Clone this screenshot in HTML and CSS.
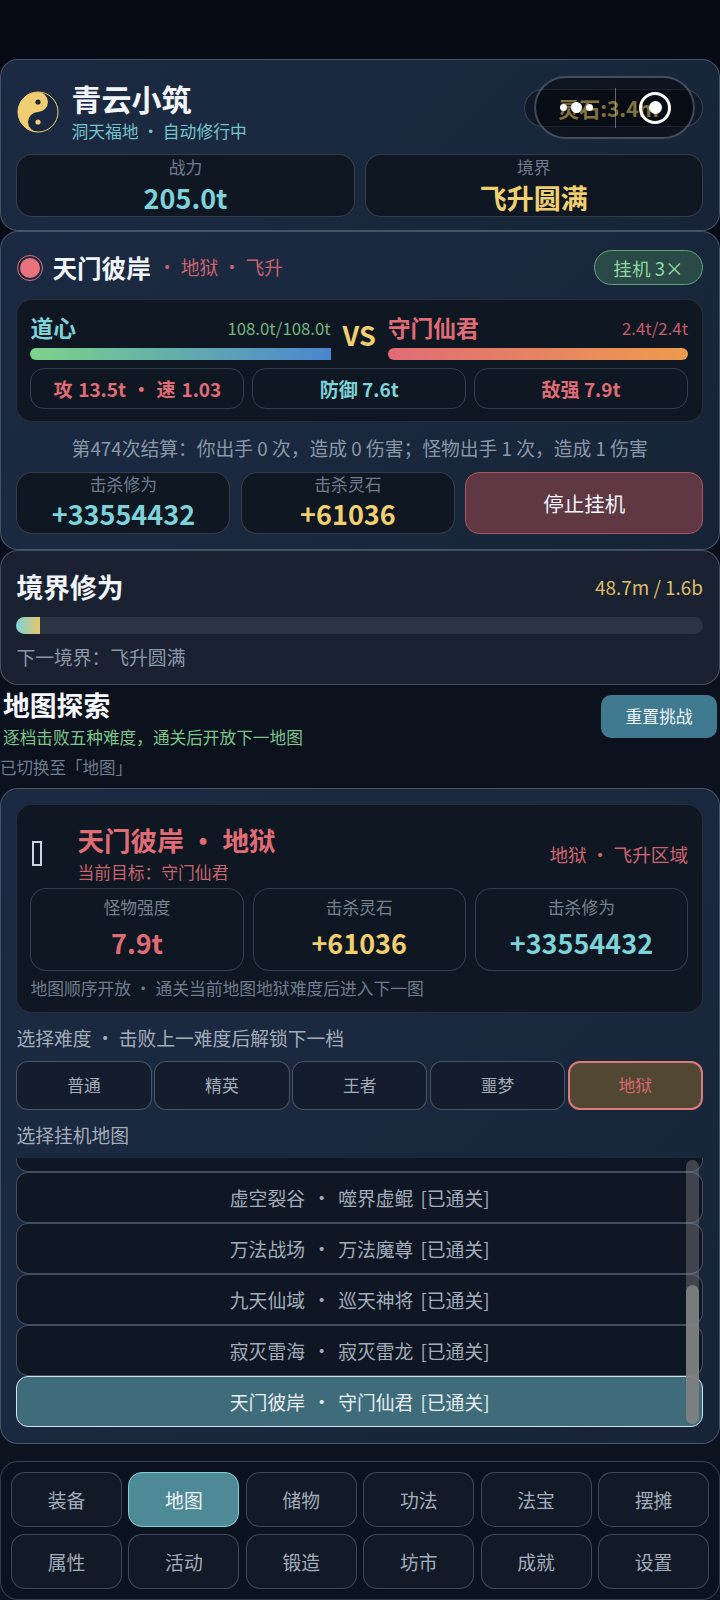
FILE: index.html
```html
<!doctype html>
<html>
  <head>
    <meta charset="UTF-8" />
    <title>青云小筑</title>
    <link rel="stylesheet" href="styles.css">
  </head>
  <body>
    <!-- header -->
    <div class="card card-blue header-card">
      <div class="header-row">
        <svg class="taiji" viewBox="-21 -21 42 42">
          <circle r="20" fill="#1a2740" stroke="#f0cd70" stroke-width="1" />
          <path d="M0 -20A20 20 0 0 0 0 20A10 10 0 0 1 0 0A10 10 0 0 0 0 -20Z" fill="#f0cd70" />
          <circle cy="-10" r="2.6" fill="#1a2740" />
          <circle cy="10" r="2.6" fill="#f0cd70" />
        </svg>
        <div class="header-text">
          <div class="header-title">青云小筑</div>
          <div class="header-sub">洞天福地 · 自动修行中</div>
        </div>
        <div class="stone-pill">灵石:3.4m</div>
      </div>
      <div class="header-stats">
        <div class="stat-box header-stat">
          <div class="stat-label">战力</div>
          <div class="stat-value teal">205.0t</div>
        </div>
        <div class="stat-box header-stat">
          <div class="stat-label">境界</div>
          <div class="stat-value gold">飞升圆满</div>
        </div>
      </div>
      <!-- capsule over the header -->
      <div class="capsule">
        <div class="capsule-dots">
          <span class="dot-small"></span>
          <span class="dot-big"></span>
          <span class="dot-small"></span>
        </div>
        <div class="capsule-line"></div>
        <div class="capsule-close"><span></span></div>
      </div>
    </div>

    <!-- battle -->
    <div class="card card-blue battle-card">
      <div class="battle-head">
        <span class="live-dot"><span></span></span>
        <span class="battle-name">天门彼岸</span>
        <span class="battle-tag">· 地狱 · 飞升</span>
        <span class="idle-pill">挂机 3×</span>
      </div>
      <div class="inner-box battle-box">
        <div class="versus">
          <div class="fighter">
            <div class="fighter-row">
              <span class="fighter-name teal">道心</span>
              <span class="fighter-hp green">108.0t/108.0t</span>
            </div>
            <div class="hp-bar hp-self"></div>
          </div>
          <div class="vs">VS</div>
          <div class="fighter">
            <div class="fighter-row">
              <span class="fighter-name red">守门仙君</span>
              <span class="fighter-hp red">2.4t/2.4t</span>
            </div>
            <div class="hp-bar hp-enemy"></div>
          </div>
        </div>
        <div class="chips">
          <div class="chip chip-attack red">攻 13.5t · 速 1.03</div>
          <div class="chip teal">防御 7.6t</div>
          <div class="chip red">敌强 7.9t</div>
        </div>
      </div>
      <div class="battle-log">第474次结算：你出手 0 次，造成 0 伤害；怪物出手 1 次，造成 1 伤害</div>
      <div class="battle-bottom">
        <div class="stat-box reward-box">
          <div class="stat-label">击杀修为</div>
          <div class="stat-value teal">+33554432</div>
        </div>
        <div class="stat-box reward-box">
          <div class="stat-label">击杀灵石</div>
          <div class="stat-value gold">+61036</div>
        </div>
        <div class="stop-button">停止挂机</div>
      </div>
    </div>

    <!-- realm progress -->
    <div class="card card-plain realm-card">
      <div class="realm-head">
        <span class="realm-title">境界修为</span>
        <span class="realm-value">48.7m / 1.6b</span>
      </div>
      <div class="realm-bar"><div class="realm-fill"></div></div>
      <div class="realm-next">下一境界：飞升圆满</div>
    </div>

    <!-- map section title -->
    <div class="map-head">
      <div>
        <div class="map-title">地图探索</div>
        <div class="map-sub">逐档击败五种难度，通关后开放下一地图</div>
      </div>
      <div class="reset-button">重置挑战</div>
    </div>
    <div class="map-notice">已切换至「地图」</div>

    <!-- map -->
    <div class="card card-blue map-card">
      <div class="inner-box target-box">
        <div class="target-head">
          <span class="target-icon"></span>
          <div class="target-text">
            <div class="target-title">天门彼岸 · 地狱</div>
            <div class="target-sub">当前目标：守门仙君</div>
          </div>
          <div class="target-zone">地狱 · 飞升区域</div>
        </div>
        <div class="target-stats">
          <div class="stat-box target-stat">
            <div class="stat-label">怪物强度</div>
            <div class="stat-value red">7.9t</div>
          </div>
          <div class="stat-box target-stat">
            <div class="stat-label">击杀灵石</div>
            <div class="stat-value gold">+61036</div>
          </div>
          <div class="stat-box target-stat">
            <div class="stat-label">击杀修为</div>
            <div class="stat-value teal">+33554432</div>
          </div>
        </div>
        <div class="target-foot">地图顺序开放 · 通关当前地图地狱难度后进入下一图</div>
      </div>

      <div class="select-label label-first">选择难度 · 击败上一难度后解锁下一档</div>
      <div class="levels">
        <div class="level">普通</div>
        <div class="level">精英</div>
        <div class="level">王者</div>
        <div class="level">噩梦</div>
        <div class="level level-active">地狱</div>
      </div>
      <div class="select-label label-second">选择挂机地图</div>
      <div class="map-list">
        <div class="map-items">
          <div class="map-item"></div>
          <div class="map-item">虚空裂谷 · 噬界虚鲲 [已通关]</div>
          <div class="map-item">万法战场 · 万法魔尊 [已通关]</div>
          <div class="map-item">九天仙域 · 巡天神将 [已通关]</div>
          <div class="map-item">寂灭雷海 · 寂灭雷龙 [已通关]</div>
          <div class="map-item map-item-active">天门彼岸 · 守门仙君 [已通关]</div>
        </div>
        <div class="scroll-track"><div class="scroll-thumb"></div></div>
      </div>
    </div>

    <!-- bottom nav -->
    <div class="nav">
      <div class="nav-item">装备</div>
      <div class="nav-item nav-active">地图</div>
      <div class="nav-item">储物</div>
      <div class="nav-item">功法</div>
      <div class="nav-item">法宝</div>
      <div class="nav-item">摆摊</div>
      <div class="nav-item">属性</div>
      <div class="nav-item">活动</div>
      <div class="nav-item">锻造</div>
      <div class="nav-item">坊市</div>
      <div class="nav-item">成就</div>
      <div class="nav-item">设置</div>
    </div>
  </body>
</html>
```

FILE: styles.css
```css
* {
  box-sizing: border-box;
}

html {
  background: #0a101b;
}

body {
  width: 720px;
  height: 1600px;
  margin: 0;
  padding-top: 59px;
  overflow: hidden;
  background: linear-gradient(180deg, #060a14 0%, #0b111d 45%, #0c1420 100%);
  color: #cbd5e1;
  font-family: 'Noto Sans CJK SC', 'Noto Sans', sans-serif;
}

.teal {
  color: #7dd3d8;
}
.gold {
  color: #f0cf6e;
}
.red {
  color: #e06c75;
}
.green {
  color: #86d08e;
}

/* cards */
.card {
  position: relative;
  border: 1px solid rgba(148, 163, 184, 0.36);
  border-radius: 18px;
  padding-left: 15.4px;
  padding-right: 16px;
}
.card-blue {
  background: linear-gradient(135deg, #1b2a42 0%, #1a293f 45%, #172437 100%);
}
.card-plain {
  background: #1a2131;
}
.inner-box {
  background: #0f1723;
  border: 1px solid rgba(148, 163, 184, 0.16);
  border-radius: 16px;
}
.stat-box {
  background: #0f1723;
  border: 1px solid rgba(148, 163, 184, 0.28);
  border-radius: 16px;
  text-align: center;
}
.stat-label {
  color: #6f7c8e;
  font-size: 16.8px;
  line-height: 24px;
}
.stat-value {
  font-size: 27px;
  font-weight: 700;
  line-height: 34px;
}

/* header */
.header-card {
  height: 172px;
  padding-top: 21px;
}
.header-row {
  display: flex;
  align-items: center;
  height: 62px;
}
.taiji {
  width: 42px;
  height: 42px;
  margin: 0 12px 0 1px;
  flex-shrink: 0;
}
.header-text {
  flex: 1;
}
.header-title {
  margin-top: -1px;
  color: #f1f5f9;
  font-size: 30px;
  font-weight: 700;
  line-height: 36px;
}
.header-sub {
  margin-top: 3px;
  color: #76c4cb;
  font-size: 16.8px;
  line-height: 24px;
}
.stone-pill {
  width: 179px;
  height: 38px;
  margin-top: -8px;
  padding-right: 10px;
  border: 1px solid rgba(148, 163, 184, 0.3);
  border-radius: 20px;
  background: rgba(15, 23, 35, 0.8);
  color: #f0cf6e;
  font-size: 21px;
  font-weight: 700;
  line-height: 36px;
  text-align: center;
}
.header-stats {
  display: grid;
  grid-template-columns: 1fr 1fr;
  gap: 10px;
  margin-top: 11px;
}
.header-stat {
  height: 63px;
}
.header-stat .stat-value {
  margin-top: 2px;
}

/* capsule */
.capsule {
  position: absolute;
  top: 16px;
  right: 24px;
  display: flex;
  align-items: center;
  width: 161px;
  height: 63px;
  border: 2px solid rgba(148, 163, 184, 0.4);
  border-radius: 32px;
  background: rgba(0, 0, 0, 0.45);
}
.capsule-dots {
  display: flex;
  align-items: center;
  justify-content: flex-end;
  gap: 4px;
  width: 57px;
  margin-right: 22px;
}
.dot-small {
  width: 7px;
  height: 7px;
  border-radius: 50%;
  background: #fff;
}
.dot-big {
  width: 11px;
  height: 11px;
  border-radius: 50%;
  background: #fff;
}
.capsule-line {
  width: 1px;
  height: 40px;
  background: rgba(203, 213, 225, 0.45);
}
.capsule-close {
  display: flex;
  align-items: center;
  justify-content: center;
  width: 32px;
  height: 32px;
  margin-left: 23px;
  border: 3px solid #fff;
  border-radius: 50%;
}
.capsule-close span {
  width: 13px;
  height: 13px;
  border-radius: 50%;
  background: #fff;
}

/* battle */
.battle-card {
  height: 319px;
  padding-top: 18px;
}
.battle-head {
  display: flex;
  align-items: center;
  height: 35px;
}
.live-dot {
  display: flex;
  align-items: center;
  justify-content: center;
  width: 26px;
  height: 26px;
  margin: 0 9px 0 1px;
  border: 1px solid #e06c75;
  border-radius: 50%;
}
.live-dot span {
  width: 20px;
  height: 20px;
  border-radius: 50%;
  background: #e8737c;
}
.battle-name {
  margin-top: -2px;
  color: #f1f5f9;
  font-size: 24.6px;
  font-weight: 700;
}
.battle-tag {
  flex: 1;
  margin-top: -2px;
  margin-left: 7px;
  color: #c9636d;
  font-size: 18.8px;
}
.idle-pill {
  width: 109px;
  height: 35px;
  border: 1px solid #5fa578;
  border-radius: 18px;
  background: #2a4a47;
  color: #8fd6a0;
  font-size: 18.6px;
  line-height: 33px;
  text-align: center;
}
.battle-box {
  height: 123px;
  margin-top: 14px;
  padding: 12px 14px 12px 13px;
}
.versus {
  display: grid;
  grid-template-columns: 1fr 57px 1fr;
}
.fighter-row {
  display: flex;
  align-items: center;
  justify-content: space-between;
  height: 36px;
  padding-bottom: 5px;
}
.fighter-name {
  font-size: 22.8px;
  font-weight: 700;
}
.fighter-hp {
  font-size: 16.8px;
  opacity: 0.85;
}
.hp-bar {
  height: 12px;
  border-radius: 6px 0 0 6px;
}
.hp-self {
  background: linear-gradient(90deg, #7dd38a 0%, #4a86cf 100%);
}
.hp-enemy {
  border-radius: 6px;
  background: linear-gradient(90deg, #e06c75 0%, #ee9b4e 100%);
}
.vs {
  padding-top: 6px;
  color: #f0cf6e;
  font-size: 27px;
  font-weight: 700;
  line-height: 34px;
  text-align: center;
}
.chips {
  display: grid;
  grid-template-columns: repeat(3, 1fr);
  gap: 8px;
  margin-top: 8px;
}
.chip {
  height: 41px;
  border: 1px solid rgba(148, 163, 184, 0.28);
  border-radius: 14px;
  font-size: 19px;
  font-weight: 700;
  line-height: 39px;
  text-align: center;
}
.chip-attack {
  word-spacing: 1.5px;
}
.battle-log {
  margin-top: 14px;
  color: #8b98a9;
  font-size: 18.8px;
  line-height: 24px;
  text-align: center;
}
.battle-bottom {
  display: grid;
  grid-template-columns: 214px 214px 1fr;
  gap: 10.5px;
  height: 62px;
  margin-top: 12px;
}
.reward-box .stat-label {
  margin-top: -1px;
}
.reward-box .stat-value {
  margin-top: 1px;
}
.stop-button {
  border: 1px solid #a85561;
  border-radius: 14px;
  background: #5f3844;
  color: #f1f5f9;
  font-size: 20.5px;
  line-height: 60px;
  text-align: center;
}

/* realm */
.realm-card {
  height: 135px;
  padding-top: 17px;
}
.realm-head {
  display: flex;
  align-items: center;
  justify-content: space-between;
  height: 36px;
}
.realm-title {
  color: #f1f5f9;
  font-size: 26.8px;
  font-weight: 700;
}
.realm-value {
  color: #dcbc6a;
  font-size: 18.9px;
}
.realm-bar {
  height: 17px;
  margin-top: 13px;
  border-radius: 9px;
  background: #2c3444;
}
.realm-fill {
  width: 24px;
  height: 17px;
  border-radius: 9px 0 0 9px;
  background: linear-gradient(90deg, #7dd3d8 0%, #e6c66a 100%);
}
.realm-next {
  margin-top: 11px;
  color: #8b98a9;
  font-size: 18.8px;
  line-height: 24px;
}

/* map head */
.map-head {
  display: flex;
  justify-content: space-between;
  padding: 2px 3px 0 3px;
}
.map-title {
  color: #f5f7fa;
  font-size: 26.8px;
  font-weight: 700;
  line-height: 36px;
}
.map-sub {
  margin-top: 2px;
  color: #7cc68a;
  font-size: 16.67px;
  line-height: 24px;
}
.reset-button {
  width: 116px;
  height: 43px;
  margin-top: 8px;
  border-radius: 10px;
  background: #3f7a90;
  color: #eef4f7;
  font-size: 16.8px;
  line-height: 43px;
  text-align: center;
}
.map-notice {
  margin-top: 6px;
  color: #6f7c8e;
  font-size: 16.5px;
  line-height: 24px;
}

/* map card */
.map-card {
  height: 656px;
  margin-top: 9px;
  padding-top: 15px;
}
.target-box {
  height: 209px;
  padding: 17px 14px 0 13px;
}
.target-head {
  display: flex;
  align-items: center;
  height: 66px;
  padding-bottom: 4px;
}
.target-icon {
  width: 10px;
  height: 25px;
  margin: 0 35px 0 2px;
  border: 2px solid #cbd5e1;
}
.target-text {
  flex: 1;
}
.target-title {
  color: #e06c75;
  font-size: 26.6px;
  font-weight: 700;
  line-height: 36px;
}
.target-sub {
  margin-top: 2px;
  color: #c9636d;
  font-size: 16.8px;
  line-height: 24px;
}
.target-zone {
  color: #d0656f;
  font-size: 18.6px;
}
.target-stats {
  display: grid;
  grid-template-columns: repeat(3, 1fr);
  gap: 9px;
}
.target-stat {
  height: 83px;
  padding-top: 6px;
}
.target-stat .stat-label {
  color: #76828f;
}
.target-stat .stat-value {
  margin-top: 7px;
}
.target-foot {
  margin-top: 6px;
  color: #6f7c8e;
  font-size: 16.8px;
  line-height: 22px;
}
.select-label {
  color: #a3adba;
  font-size: 18.8px;
  line-height: 24px;
}
.label-first {
  margin-top: 13px;
}
.label-second {
  margin-top: 13px;
}
.levels {
  display: grid;
  grid-template-columns: repeat(5, 1fr);
  gap: 2.4px;
  margin-top: 11px;
}
.level {
  height: 49px;
  border: 1px solid rgba(148, 163, 184, 0.42);
  border-radius: 12px;
  background: #141d2d;
  color: #a3adba;
  font-size: 16.8px;
  line-height: 47px;
  text-align: center;
}
.level-active {
  border: 2px solid #dd7a7c;
  background: #524733;
  color: #d9676f;
  line-height: 45px;
}
.map-list {
  position: relative;
  height: 269px;
  margin-top: 11px;
  overflow: hidden;
}
.map-items {
  display: flex;
  flex-direction: column;
  justify-content: flex-end;
  height: 100%;
}
.map-item {
  flex: 0 0 50.8px;
  border: 1px solid rgba(148, 163, 184, 0.4);
  border-radius: 12px;
  background: #0f1724;
  color: #a3adba;
  font-size: 18.8px;
  line-height: 49px;
  text-align: center;
  word-spacing: 3px;
}
.map-item-active {
  border-color: #d4e4e8;
  background: #3f6c7a;
  color: #e8eef2;
}
.scroll-track {
  position: absolute;
  top: 2px;
  right: 4px;
  width: 13px;
  height: 264px;
  border-radius: 7px;
  background: rgba(160, 160, 160, 0.33);
}
.scroll-thumb {
  width: 13px;
  height: 139px;
  margin-top: 125px;
  border-radius: 7px;
  background: #7d8080;
  opacity: 0.92;
}

/* nav */
.nav {
  display: grid;
  grid-template-columns: repeat(6, 1fr);
  gap: 7px 6.4px;
  height: 139px;
  margin-top: 17px;
  padding: 10px;
  border: 1px solid rgba(148, 163, 184, 0.3);
  border-radius: 18px;
  background: #0c1320;
}
.nav-item {
  height: 55px;
  border: 1px solid rgba(148, 163, 184, 0.34);
  border-radius: 14px;
  background: #121a28;
  color: #a3adba;
  font-size: 18.8px;
  line-height: 53px;
  text-align: center;
}
.nav-active {
  border-color: #7dd3d8;
  background: #4d8a96;
  color: #f1f5f9;
}
```
